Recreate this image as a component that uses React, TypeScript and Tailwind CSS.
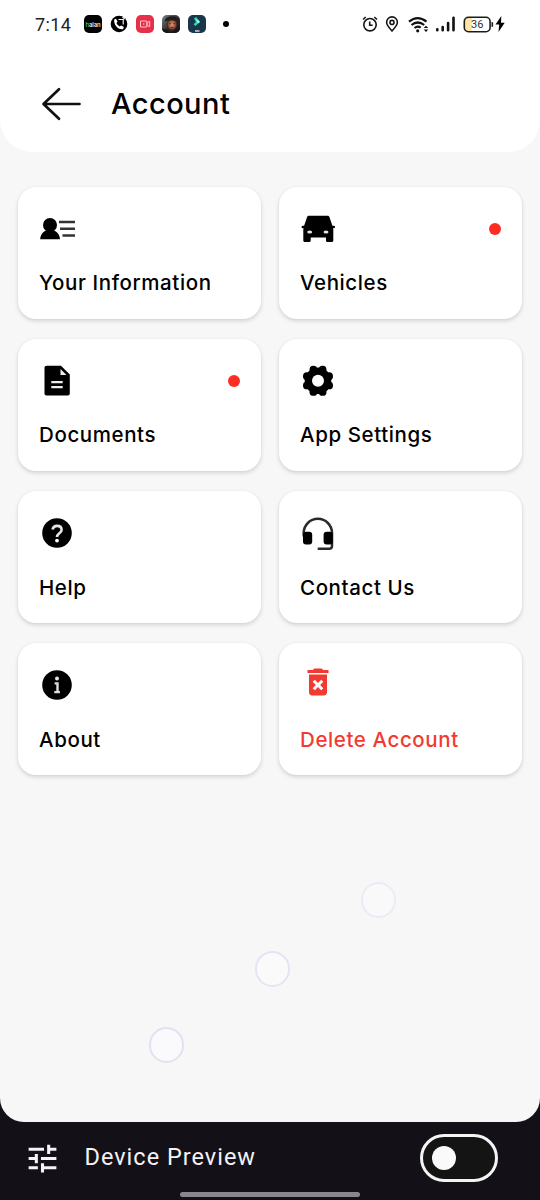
import React from "react";
import { MdDeleteForever, MdTune } from "react-icons/md";

const box = "block h-9 w-9 overflow-visible";

function PersonIcon() {
  return (
    <svg viewBox="0 0 36 36" className={box}>
      <circle cx="11" cy="14" r="7" />
      <path d="M1.200 28.300C1.400 23.600 4.200 20.800 7 19.600h8c2.900 1.200 5.700 4 6 8.700z" />
      <path d="M20 11h16M21 17.800h15M23.500 24.500H36" stroke="#333" strokeWidth="2.600" />
    </svg>
  );
}

function CarIcon() {
  return (
    <svg viewBox="0 0 36 36" className={box}>
      <path d="M9 4.700h18.400c1 0 1.700.5 2 1.400l3 8.700h1.600c1.500 0 1.500 2.500 0 2.500h-1c.2.6.3 1.200.3 2v10.200c0 .9-.6 1.500-1.500 1.500h-4.300c-.9 0-1.500-.6-1.500-1.500v-3H10.700v3c0 .9-.6 1.500-1.500 1.500H4.800c-.9 0-1.500-.6-1.500-1.500V19.300c0-.8.1-1.400.3-2h-1c-1.500 0-1.500-2.500 0-2.500h1.500l3-8.700c.3-.9.900-1.400 1.900-1.400z" />
      <ellipse cx="9.700" cy="21" rx="2.500" ry="1.600" fill="#e5e5e5" />
      <ellipse cx="26" cy="21" rx="2.500" ry="1.600" fill="#e5e5e5" />
    </svg>
  );
}

function DocumentIcon() {
  return (
    <svg viewBox="0 0 36 36" className={box}>
      <path d="M7.500 2.800H22l8.800 8.700v19c0 1.200-.8 2-2 2H7.500c-1.200 0-2-.8-2-2V4.800c0-1.200.8-2 2-2z" />
      <path d="M21.500 6v6h6z" fill="#eee" />
      <path d="M12.300 19.100h11.400M12.300 24.200h11.400" stroke="#eee" strokeWidth="2.200" />
    </svg>
  );
}

const LOBES = [
  [29.100, 22.400], [22.600, 28.900], [13.400, 28.900], [6.900, 22.400],
  [6.900, 13.200], [13.400, 6.700], [22.600, 6.700], [29.100, 13.200],
];

function GearIcon() {
  return (
    <svg viewBox="0 0 36 36" className={box}>
      <circle cx="18" cy="17.800" r="13.300" />
      {LOBES.map(([x, y]) => (
        <circle key={x + "-" + y} cx={x} cy={y} r="3.900" />
      ))}
      <circle cx="18" cy="17.800" r="6" fill="#fff" />
    </svg>
  );
}

function HelpIcon() {
  return (
    <svg viewBox="0 0 36 36" className={box}>
      <circle cx="18" cy="18" r="14.800" />
      <path d="M13.500 14.600c.5-2.500 2.200-3.700 4.500-3.700 2.700 0 4.600 1.600 4.600 4 0 3.300-4.600 3.500-4.600 7.100" fill="none" stroke="#e5e5e5" strokeWidth="2.600" />
      <circle cx="18" cy="25.600" r="1.900" fill="#fff" />
    </svg>
  );
}

function HeadsetIcon() {
  return (
    <svg viewBox="0 0 36 36" className={box}>
      <path d="M3.700 21.500V18a14.100 14.100 0 0 1 28.300 0V31q0 2.800-2.800 2.800H17.700" fill="none" stroke="#2a2a2a" strokeWidth="2.500" />
      <rect x="3" y="16.800" width="9.200" height="12.800" rx="3" />
      <rect x="23.600" y="16.800" width="9.200" height="12.800" rx="3" />
    </svg>
  );
}

function InfoIcon() {
  return (
    <svg viewBox="0 0 36 36" className={box}>
      <circle cx="18" cy="18" r="14.800" />
      <circle cx="18" cy="11.600" r="2" fill="#e5e5e5" />
      <path d="M15.600 16.400h2.900v8.600M15.300 25.100h5.600" fill="none" stroke="#ddd" strokeWidth="2.400" />
    </svg>
  );
}

type CardProps = { icon: React.ReactNode; label: string; dot?: boolean; danger?: boolean };

function Card({ icon, label, dot, danger }: CardProps) {
  return (
    <button
      className={
        "flex h-[131.600px] flex-col items-start rounded-[18px] bg-white pl-[21px] pr-[21px] text-left shadow-[0_2px_4px_rgba(0,0,0,0.15),0_0_2px_rgba(0,0,0,0.05)] " +
        (danger ? "text-[#f13b32]" : "text-black")
      }
    >
      <div className={"flex w-full items-center justify-between " + (danger ? "mt-[21px] mb-[3px]" : "mt-6")}>
        {icon}
        {dot && <span className="h-3 w-3 rounded-full bg-[#fd2d23]" />}
      </div>
      <span className="mt-[22.400px] whitespace-nowrap text-[20.500px] font-medium leading-7 tracking-[0.600px]">{label}</span>
    </button>
  );
}

function StatusBar() {
  return (
    <div className="flex h-12 items-center pl-[35px] pr-[35px]">
      <span className="w-[49px] font-[Roboto] text-[18px] tracking-[0.400px] text-[#222]">7:14</span>
      <div className="flex items-center gap-2">
        <span className="flex h-[18px] w-[18px] items-center justify-center rounded-[5px] bg-black text-[6px] font-medium tracking-[-0.100px] text-white">
          <span className="text-[#45d5a0]">h</span>alan
        </span>
        <svg viewBox="0 0 18 18" className="h-[18px] w-[18px]">
          <circle cx="9" cy="9" r="8.300" />
          <path d="M4.200 4.400 6 3.700 7.600 6.800 6.400 8.100q1 2.400 3.300 3.500l1.400-1.200 2.800 1.700-.8 1.900c-4.500 1.300-9.700-4.200-8.900-9.600z" fill="#fff" />
          <path d="M8.500 4.500h4.700v5M12.500 2l2.200 2.200" fill="none" stroke="#fff" strokeWidth="1.100" />
        </svg>
        <svg viewBox="0 0 18 18" className="h-[18px] w-[18px]">
          <rect width="18" height="18" rx="5" fill="#e72f49" />
          <path d="M4.500 6h6.300v6H4.500zM11 8l2.700-1.800v5.600L11 10z" fill="none" stroke="#ffc3c8" strokeWidth="1" />
          <circle cx="7.700" cy="9" r=".8" fill="#ffc3c8" />
        </svg>
        <svg viewBox="0 0 18 18" className="h-[18px] w-[18px]">
          <defs>
            <clipPath id="avatar"><rect width="18" height="18" rx="5" /></clipPath>
            <linearGradient id="backdrop" x1="0" y1="0" x2="1" y2="1">
              <stop offset="0" stopColor="#7b8286" />
              <stop offset="0.6" stopColor="#2a2424" />
              <stop offset="1" stopColor="#151212" />
            </linearGradient>
            <radialGradient id="face">
              <stop offset="0" stopColor="#d99a78" />
              <stop offset="0.6" stopColor="#a05a40" />
              <stop offset="1" stopColor="#2b1a17" />
            </radialGradient>
          </defs>
          <g clipPath="url(#avatar)">
            <rect width="18" height="18" fill="url(#backdrop)" />
            <ellipse cx="10" cy="9.500" rx="5.200" ry="6" fill="url(#face)" />
            <path d="M2.500 6.500q1-5 7-5.300T17 6.500q-7-2.500-14.500 0z" fill="#241d1d" />
            <path d="M7.200 8.700h2M11.200 8.700h1.800M9 12.600h2.500" stroke="#30201d" strokeWidth="0.800" />
            <path d="M0 13.500l5 1 3 3.500H0zM18 12l-5 3-2 3h7z" fill="#1b1616" />
          </g>
        </svg>
        <svg viewBox="0 0 18 18" className="h-[18px] w-[18px]">
          <rect width="18" height="18" rx="5" fill="#19364b" />
          <path d="m6 3.500 2-1.500 4 4.500-4.500 4.500-2-1.700L8 7z" fill="#35d5bb" />
          <path d="m8 4 4 3-2 1.500z" fill="#a2fff1" />
          <path d="M7 16h4.500" stroke="#fff" strokeWidth="1.200" />
        </svg>
      </div>
      <span className="ml-[17px] h-1.5 w-1.5 rounded-full bg-black" />
      <div className="ml-auto flex items-center">
        <svg viewBox="0 0 16 16" className="h-4 w-4" fill="none" stroke="#161616" strokeWidth="1.600">
          <circle cx="8" cy="8.700" r="6.200" />
          <path d="M7.700 5.500v3.700h3M1 3.500 3.700 1M12.300 1 15 3.500" />
        </svg>
        <svg viewBox="0 0 14 16" className="ml-[7px] h-4 w-3.5" fill="none" stroke="#161616" strokeWidth="1.600">
          <path d="M7 15C4 11.700 1.600 9.200 1.600 6.300a5.400 5.400 0 0 1 10.800 0C12.400 9.200 10 11.700 7 15z" />
          <circle cx="7" cy="6.400" r="2" />
        </svg>
        <svg viewBox="0 0 21 17" className="ml-[9px] h-[17px] w-[21px]" fill="none" stroke="#111" strokeWidth="2.200">
          <path d="M1 5.600q8.500-7 17.500 0M3.500 9q6.300-5 12.700 0M6.500 12q3.200-2.500 6.200-.3" />
          <circle cx="9.700" cy="14.800" r="1.600" fill="#111" stroke="none" />
          <path d="m15.700 12 2.300-2.300 2.300 2.300zM15.700 13.500l2.300 2.500 2.300-2.500z" fill="#111" stroke="none" />
        </svg>
        <svg viewBox="0 0 20 16" className="ml-[6px] h-4 w-5" fill="none" stroke="#111" strokeWidth="2.600" strokeLinecap="round">
          <path d="M2.300 13.300v1M7.700 11v3.300M13.100 7v7.300M18.500 1.700v12.600" />
        </svg>
        <svg viewBox="0 0 31 17" className="ml-[8px] h-[17px] w-[31px]">
          <path d="M5 1.500h4v14H5a3.500 3.500 0 0 1-3.500-3.500V5A3.500 3.500 0 0 1 5 1.500z" fill="#ffe6a3" />
          <rect x="1.300" y="1.300" width="25.800" height="14.400" rx="4.200" fill="none" stroke="#1c1c1c" strokeWidth="1.600" />
          <path d="M29.300 6.200v4.600" stroke="#1c1c1c" strokeWidth="1.600" />
          <text x="14.200" y="12.400" textAnchor="middle" fontSize="11" fill="#333" fontFamily="Roboto">36</text>
        </svg>
        <svg viewBox="0 0 10 16" className="ml-px h-4 w-2.5">
          <path d="M6.300 0 .5 8.500h3.700L3.500 16 9.700 6.700H6z" />
        </svg>
      </div>
    </div>
  );
}

export default function App() {
  return (
    <div className="h-[1200px] w-[540px] overflow-hidden bg-[#131117] font-[Inter,sans-serif] text-black">
      <main className="relative h-[1122px] overflow-hidden rounded-b-[24px] bg-[#f7f7f7]">
        <header className="h-[152px] rounded-b-[32px] bg-white">
          <StatusBar />
          <div className="flex h-28 items-center pl-[41px]">
            <svg viewBox="0 0 40 34" className="h-[34px] w-10" fill="none" stroke="#111" strokeWidth="2.700" strokeLinecap="round" strokeLinejoin="round">
              <path d="M18 2.300 2.500 17 18 31.700M3 17h35.500" />
            </svg>
            <h1 className="ml-[30px] text-[29px] font-medium leading-9 tracking-[0.450px]">Account</h1>
          </div>
        </header>
        <section className="grid grid-cols-2 gap-x-[18px] gap-y-[20.500px] px-[18px] pt-[35px]">
          <Card icon={<PersonIcon />} label="Your Information" />
          <Card icon={<CarIcon />} label="Vehicles" dot />
          <Card icon={<DocumentIcon />} label="Documents" dot />
          <Card icon={<GearIcon />} label="App Settings" />
          <Card icon={<HelpIcon />} label="Help" />
          <Card icon={<HeadsetIcon />} label="Contact Us" />
          <Card icon={<InfoIcon />} label="About" />
          <Card icon={<MdDeleteForever size={36} />} label="Delete Account" danger />
        </section>
        <span className="absolute left-[361px] top-[882px] h-9 w-[35px] rounded-full border-2 border-[#ebebf5] bg-[#f9f9fa]" />
        <span className="absolute left-[255px] top-[951px] h-9 w-[35px] rounded-full border-2 border-[#e4e4f3] bg-[#fafafb]" />
        <span className="absolute left-[149px] top-[1027px] h-9 w-[35px] rounded-full border-2 border-[#e1e1f2] bg-[#fafafc]" />
      </main>
      <footer className="flex h-[78px] flex-col">
        <div className="flex h-[70px] items-center pl-[23.500px] pr-[42px] pt-0.5">
          <MdTune size={37} color="#f5f2f8" />
          <span className="ml-[24px] font-[Roboto] text-[23.500px] tracking-[1px] text-[#f4f2f6]">Device Preview</span>
          <button aria-label="Device Preview" className="ml-auto flex h-12 w-[78px] items-center rounded-full border-[3px] border-[#f4f4f4] bg-[#141414] pl-[9px]">
            <span className="h-6 w-6 rounded-full bg-[#fafafa]" />
          </button>
        </div>
        <span className="mx-auto h-[5px] w-[180px] rounded-full bg-[#89878b]" />
      </footer>
    </div>
  );
}
